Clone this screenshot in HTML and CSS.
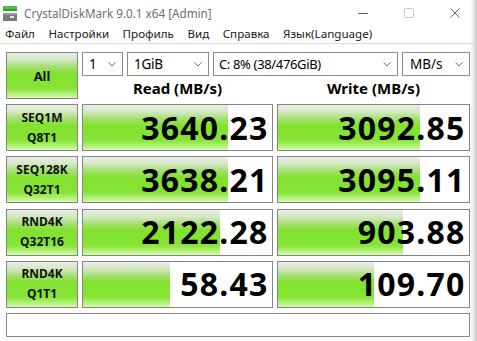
FILE: index.html
```html
<!DOCTYPE html>
<html lang="ru">
<head>
<meta charset="utf-8">
<title>CrystalDiskMark 9.0.1 x64 [Admin]</title>
<link rel="stylesheet" href="styles.css">
</head>
<body>
<div class="window">
  <div class="titlebar">
    <svg class="app-icon" width="14" height="16" viewBox="0 0 14 16">
      <rect x="0" y="0" width="14" height="3" fill="#49c04a"/>
      <rect x="0" y="3" width="14" height="2" fill="#2f9a36"/>
      <rect x="0" y="7" width="14" height="8" fill="#7a7a7a"/>
      <rect x="0" y="7" width="14" height="2" fill="#9a9a9a"/>
      <rect x="7" y="10" width="4" height="2" fill="#e6e6e6"/>
    </svg>
    <span class="title">CrystalDiskMark 9.0.1 x64 [Admin]</span>
    <div class="controls">
      <span class="ctl"><svg width="10" height="10" viewBox="0 0 10 10"><line x1="0" y1="5.5" x2="10" y2="5.5" stroke="#5f5f5f" stroke-width="1"/></svg></span>
      <span class="ctl"><svg width="10" height="10" viewBox="0 0 10 10"><rect x="0.5" y="0.5" width="9" height="9" rx="1" fill="none" stroke="#c9c9c9" stroke-width="1"/></svg></span>
      <span class="ctl"><svg width="10" height="10" viewBox="0 0 10 10"><path d="M0.5 0.5 L9.5 9.5 M9.5 0.5 L0.5 9.5" stroke="#6a6a6a" stroke-width="1" fill="none"/></svg></span>
    </div>
  </div>
  <div class="menubar">
    <span>Файл</span>
    <span>Настройки</span>
    <span>Профиль</span>
    <span>Вид</span>
    <span>Справка</span>
    <span>Язык(Language)</span>
  </div>
  <div class="main">
    <div class="top">
      <div class="btn-all green">All</div>
      <div class="top-right">
        <div class="selects">
          <div class="select s-count"><span>1</span><svg class="chev" width="8" height="5" viewBox="0 0 8 5"><polyline points="0.5,0.5 4,4 7.5,0.5" fill="none" stroke="#707070" stroke-width="1"/></svg></div>
          <div class="select s-size"><span>1GiB</span><svg class="chev" width="8" height="5" viewBox="0 0 8 5"><polyline points="0.5,0.5 4,4 7.5,0.5" fill="none" stroke="#707070" stroke-width="1"/></svg></div>
          <div class="select s-drive"><span>C: 8% (38/476GiB)</span><svg class="chev" width="8" height="5" viewBox="0 0 8 5"><polyline points="0.5,0.5 4,4 7.5,0.5" fill="none" stroke="#707070" stroke-width="1"/></svg></div>
          <div class="select s-unit"><span>MB/s</span><svg class="chev" width="8" height="5" viewBox="0 0 8 5"><polyline points="0.5,0.5 4,4 7.5,0.5" fill="none" stroke="#707070" stroke-width="1"/></svg></div>
        </div>
        <div class="headers">
          <div class="hdr">Read (MB/s)</div>
          <div class="hdr">Write (MB/s)</div>
        </div>
      </div>
    </div>
    <div class="results">
      <div class="label green"><span>SEQ1M</span><span>Q8T1</span></div>
      <div class="value" style="--w:145px">3640.23</div>
      <div class="value" style="--w:142px">3092.85</div>

      <div class="label green"><span>SEQ128K</span><span>Q32T1</span></div>
      <div class="value" style="--w:145px">3638.21</div>
      <div class="value" style="--w:142px">3095.11</div>

      <div class="label green"><span>RND4K</span><span>Q32T16</span></div>
      <div class="value" style="--w:137px">2122.28</div>
      <div class="value" style="--w:125px">903.88</div>

      <div class="label green"><span>RND4K</span><span>Q1T1</span></div>
      <div class="value" style="--w:87px">58.43</div>
      <div class="value" style="--w:96px">109.70</div>
    </div>
    <div class="status"></div>
  </div>
</div>
</body>
</html>
```
FILE: styles.css
```css
* {
  box-sizing: border-box;
  margin: 0;
  padding: 0;
}

html, body {
  width: 477px;
  height: 341px;
  overflow: hidden;
}

body {
  font-family: "Noto Sans", "Segoe UI", sans-serif;
  color: #000;
  background: #fff;
}

.window {
  width: 477px;
  height: 341px;
  display: flex;
  flex-direction: column;
  background: linear-gradient(to right, #ffffff 470px, #ededed 473px, #c6c6c6 477px);
}

.titlebar {
  height: 25px;
  display: flex;
  align-items: center;
  padding-left: 3px;
}

.app-icon {
  margin-top: 2px;
}

.title {
  margin-left: 7px;
  font-size: 11.7px;
  color: #6f6f6f;
}

.controls {
  margin-left: auto;
  margin-right: -1px;
  height: 100%;
  display: flex;
}

.ctl {
  width: 46px;
  display: flex;
  align-items: center;
  justify-content: center;
}

.menubar {
  height: 19px;
  display: flex;
  align-items: center;
  gap: 13.5px;
  padding-left: 5px;
  font-size: 11.6px;
  color: #1a1a1a;
  border-bottom: 1px solid #dcdcdc;
  padding-bottom: 2px;
}

.main {
  padding: 8px 7px 0 6px;
  display: flex;
  flex-direction: column;
}

.green {
  background: linear-gradient(to bottom, #eaeee7 0%, #d4e8c4 15%, #a6e074 30%, #82e22f 45%, #86e434 78%, #a8ee6a 88%, #d4f8b0 100%);
  border: 1px solid #858585;
}

.top {
  display: grid;
  grid-template-columns: 72px 1fr;
  column-gap: 4px;
  height: 47px;
}

.btn-all {
  display: flex;
  align-items: center;
  justify-content: center;
  font-size: 13px;
  font-weight: 700;
  color: #111;
}

.top-right {
  display: flex;
  flex-direction: column;
}

.selects {
  height: 24px;
  display: flex;
  gap: 4px;
}

.select {
  height: 24px;
  border: 1px solid #8a8a8a;
  background: #fff;
  display: flex;
  align-items: center;
  justify-content: space-between;
  padding: 0 6px 0 6px;
  font-size: 13.5px;
  letter-spacing: -0.3px;
  color: #000;
}

.s-count { width: 41px; }
.s-size { width: 82px; }
.s-drive { width: 185px; padding-left: 5px; font-size: 13px; letter-spacing: -0.35px; }
.s-unit { width: 68px; padding-left: 7px; letter-spacing: 0; }

.chev {
  flex: none;
}

.headers {
  flex: 1;
  display: grid;
  grid-template-columns: 191px 193px;
  column-gap: 4px;
  align-items: center;
}

.hdr {
  text-align: center;
  font-size: 15px;
  font-weight: 700;
  padding-top: 1px;
}

.results {
  margin-top: 5px;
  display: grid;
  grid-template-columns: 72px 191px 193px;
  column-gap: 4px;
  row-gap: 5.33px;
  grid-auto-rows: 47px;
}

.label {
  display: flex;
  flex-direction: column;
  align-items: center;
  justify-content: center;
  font-size: 12px;
  font-weight: 700;
  line-height: 20px;
  color: #111;
}

.value {
  border: 1px solid #858585;
  background-color: #fff;
  background-image: linear-gradient(to bottom, #eaeee7 0%, #d4e8c4 15%, #a6e074 30%, #82e22f 45%, #86e434 78%, #a8ee6a 88%, #d4f8b0 100%);
  background-size: var(--w) 100%;
  background-repeat: no-repeat;
  display: flex;
  align-items: center;
  justify-content: flex-end;
  padding-right: 3.5px;
  font-size: 32px;
  font-weight: 700;
  letter-spacing: 1.2px;
  line-height: 1;
}

.status {
  margin-top: 5px;
  height: 24px;
  border: 1px solid #8a8a8a;
  background: #fff;
}
```
